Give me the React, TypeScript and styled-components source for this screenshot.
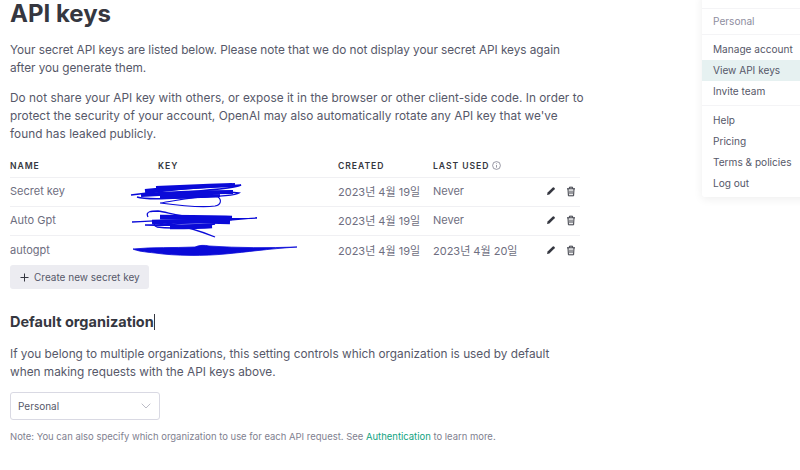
import React from "react";
import styled, { createGlobalStyle } from "styled-components";

const Global = createGlobalStyle`
  html, body { margin: 0; padding: 0; background: #fff; overflow: hidden; }
  body { font-family: Inter, "Noto Sans CJK KR", sans-serif; color: #353740; }
`;
const Page = styled.div`
  position: relative;
  width: 800px;
  height: 470px;
  overflow: hidden;
  background: #fff;
`;
const Main = styled.main`
  width: 570px;
  padding: 1px 0 0 10px;
`;
const Title = styled.h1`
  margin: 0;
  font-size: 24px;
  line-height: 26px;
  font-weight: 700;
  color: #353740;
`;
const Para = styled.p<{ $track?: string }>`
  margin: 0;
  font-size: 11.8px;
  line-height: 18px;
  color: #565869;
  white-space: nowrap;
  letter-spacing: ${(p) => p.$track || "normal"};
`;
const Intro = styled(Para)`
  margin-top: 14px;
`;
const Warning = styled(Para)`
  margin-top: 12px;
`;
const Table = styled.div`
  position: relative;
  margin-top: 7px;
`;
const Row = styled.div<{ $head?: boolean }>`
  display: grid;
  grid-template-columns: 148px 180px 95px 1fr 48px;
  align-items: center;
  box-sizing: border-box;
  height: ${(p) => (p.$head ? "28px" : "29px")};
  padding: ${(p) => (p.$head ? "4px 0 0" : "0 0 2px")};
  border-bottom: 1px solid #f0f0f3;
  &:last-of-type {
    border-bottom: none;
    padding-bottom: 1px;
  }
`;
const Head = styled.div`
  font-size: 8.6px;
  font-weight: 600;
  letter-spacing: 0.11em;
  color: #353740;
  display: flex;
  align-items: center;
  gap: 3px;
`;
const Cell = styled.div`
  font-size: 11px;
  color: #6e6e80;
  white-space: nowrap;
`;
const Actions = styled.div`
  display: flex;
  gap: 10px;
  align-items: center;
  padding-left: 14px;
  color: #353740;
`;
const Scribble = styled.svg`
  position: absolute;
  left: 0;
  top: 0;
  pointer-events: none;
`;
const CreateButton = styled.button`
  display: flex;
  align-items: center;
  gap: 5px;
  width: 139px;
  height: 24px;
  padding: 0 0 0 10px;
  border: none;
  border-radius: 3px;
  background: #ececf1;
  color: #565869;
  font: 400 10px Inter, sans-serif;
`;
const SubTitle = styled.h2`
  margin: 22px 0 0;
  font-size: 14.5px;
  line-height: 22px;
  font-weight: 700;
  color: #353740;
  display: flex;
  align-items: center;
`;
const Caret = styled.span`
  width: 1px;
  height: 16px;
  background: #353740;
`;
const OrgIntro = styled(Para)`
  margin-top: 12px;
`;
const Select = styled.div`
  display: flex;
  align-items: center;
  justify-content: space-between;
  box-sizing: border-box;
  width: 150px;
  height: 28px;
  margin-top: 11px;
  padding: 0 8px 0 7px;
  border: 1px solid #d9d9e3;
  border-radius: 3px;
  font-size: 10px;
  color: #565869;
`;
const Note = styled.p`
  margin: 10px 0 0;
  font-size: 9.47px;
  line-height: 14px;
  color: #7f7f90;
  white-space: nowrap;
`;
const NoteLink = styled.a`
  color: #10a37f;
`;
const Menu = styled.aside`
  position: absolute;
  top: -8px;
  left: 702px;
  width: 110px;
  height: 205px;
  background: #fff;
  border-radius: 3px;
  box-shadow: 0 2px 10px rgba(0, 0, 0, 0.07);
  display: flex;
  flex-direction: column;
`;
const MenuGroup = styled.div`
  padding: 4px 0 3px;
  border-top: 1px solid #f4f4f6;
`;
const OrgGroup = styled(MenuGroup)`
  margin-top: 16px;
  padding: 2px 0;
`;
const MenuItem = styled.div<{ $active?: boolean; $muted?: boolean }>`
  height: 21px;
  line-height: 21px;
  padding-left: 11px;
  font-size: 10.1px;
  color: ${(p) => (p.$muted ? "#8e8ea0" : "#565869")};
  background: ${(p) => (p.$active ? "#e6f1f1" : "transparent")};
`;

const Pencil = () => (
  <svg width="10" height="10" viewBox="0 0 10 10">
    <path d="M1 9l.6-2.4L6.8 1.4a.8.8 0 0 1 1.1 0l.7.7a.8.8 0 0 1 0 1.1L3.4 8.4z" fill="#353740" />
  </svg>
);
const Trash = () => (
  <svg width="10" height="11" viewBox="0 0 10 11" fill="none" stroke="#353740" strokeWidth="1">
    <path d="M1 2.8h8M3.4 2.6V1.2h3.2v1.4M2 2.8l.4 7h5.2l.4-7M4 4.6v3.6M6 4.6v3.6" />
  </svg>
);
const Info = () => (
  <svg width="9" height="9" viewBox="0 0 9 9" fill="none" stroke="#6e6e80" strokeWidth="0.7">
    <circle cx="4.5" cy="4.5" r="3.9" />
    <path d="M4.5 4v2.6M4.5 2.4v.7" />
  </svg>
);
const Chevron = () => (
  <svg width="10" height="6" viewBox="0 0 10 6" fill="none" stroke="#b4b4c0" strokeWidth="0.9">
    <path d="M.7.7L5 5 9.3.7" />
  </svg>
);
const Plus = () => (
  <svg width="9" height="9" viewBox="0 0 9 9" stroke="#353740" strokeWidth="1">
    <path d="M4.5.5v8M.5 4.5h8" />
  </svg>
);

const rows = [
  ["Secret key", "2023년 4월 19일", "Never"],
  ["Auto Gpt", "2023년 4월 19일", "Never"],
  ["autogpt", "2023년 4월 19일", "2023년 4월 20일"],
];

export default function App() {
  return (
    <Page>
      <Global />
      <Main>
        <Title>API keys</Title>
        <Intro $track="-0.04px">
          Your secret API keys are listed below. Please note that we do not display your secret API keys again
          <br />
          after you generate them.
        </Intro>
        <Warning $track="0.04px">
          Do not share your API key with others, or expose it in the browser or other client-side code. In order to
          <br />
          protect the security of your account, OpenAI may also automatically rotate any API key that we've
          <br />
          found has leaked publicly.
        </Warning>
        <Table>
          <Row $head>
            <Head>NAME</Head>
            <Head>KEY</Head>
            <Head>CREATED</Head>
            <Head>
              LAST USED <Info />
            </Head>
            <span />
          </Row>
          {rows.map((r) => (
            <Row key={r[0]}>
              <Cell>{r[0]}</Cell>
              <span />
              <Cell>{r[1]}</Cell>
              <Cell>{r[2]}</Cell>
              <Actions>
                <Pencil />
                <Trash />
              </Actions>
            </Row>
          ))}
          <Scribble width="310" height="115" viewBox="0 0 310 115" fill="none" stroke="#0a0ad8">
            <path d="M121 45c30-4 70-8 110-10-6 3-40 6-70 8 26-1 50-2 68 0-6 4-40 4-60 5-18 1-36 1-42-1" strokeWidth="1.4" />
            <path d="M135 41c28-3 60-5 90-6M131 45c30-2 60-3 92-3M146 38c20-1 50-2 76-3M150 47c20 0 40-1 60-2" strokeWidth="4" />
            <path d="M150 53c20-3 40-8 58-6 4 3 3 8-3 9-15 2-40-1-55-3" strokeWidth="1.1" />
            <path d="M122 72c40-2 90-3 125-4-30 2-70 6-112 7 30 1 50 0 70-1-20 4-45 5-58 3-6-2-1-7 6-5 20 4 40 10 52 15M138 67c-3-6 4-6 10-6 8 1 20 5 34 6" strokeWidth="1.3" />
            <path d="M150 67c24 0 48 0 72 1M142 72c24-1 52-1 78 0M160 77c14 0 30 0 42-1" strokeWidth="4.5" />
            <path d="M123 99c20-2 40-1 62-2 4-2 10-2 14-1 30 2 60 2 88 1-30 2-50 5-72 7-20 2-50 2-70-1-10-1-18-2-22-4z" fill="#0a0ad8" strokeWidth="0.8" />
          </Scribble>
        </Table>
        <CreateButton>
          <Plus /> Create new secret key
        </CreateButton>
        <SubTitle>
          Default organization
          <Caret />
        </SubTitle>
        <OrgIntro>
          If you belong to multiple organizations, this setting controls which organization is used by default
          <br />
          when making requests with the API keys above.
        </OrgIntro>
        <Select>
          Personal
          <Chevron />
        </Select>
        <Note>
          Note: You can also specify which organization to use for each API request. See{" "}
          <NoteLink>Authentication</NoteLink> to learn more.
        </Note>
      </Main>
      <Menu>
        <OrgGroup>
          <MenuItem $muted>Personal</MenuItem>
        </OrgGroup>
        <MenuGroup>
          <MenuItem>Manage account</MenuItem>
          <MenuItem $active>View API keys</MenuItem>
          <MenuItem>Invite team</MenuItem>
        </MenuGroup>
        <MenuGroup>
          <MenuItem>Help</MenuItem>
          <MenuItem>Pricing</MenuItem>
          <MenuItem>Terms &amp; policies</MenuItem>
          <MenuItem>Log out</MenuItem>
        </MenuGroup>
      </Menu>
    </Page>
  );
}
